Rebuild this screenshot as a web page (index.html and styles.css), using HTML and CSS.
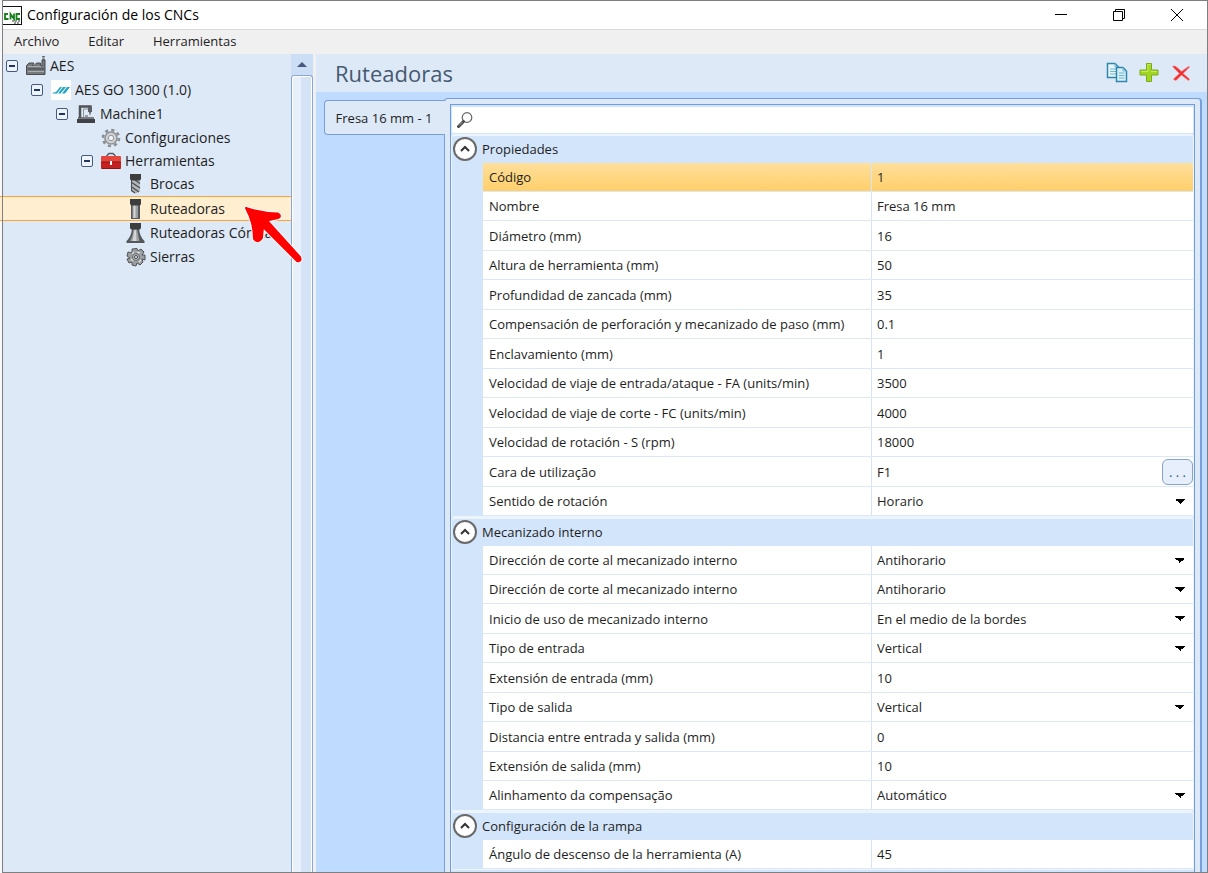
FILE: index.html
```html
<!DOCTYPE html>
<html lang="es">
<head>
<meta charset="utf-8">
<title>Configuración de los CNCs</title>
<link rel="stylesheet" href="styles.css">
</head>
<body>
<div class="window">
  <header class="titlebar">
    <svg class="app-icon" viewBox="0 0 19 19" aria-hidden="true">
      <rect x="0" y="0" width="19" height="19" fill="#111"/>
      <rect x="0" y="1" width="18" height="17" fill="#fff"/>
      <path d="M5 8H2V13H5.500M7.500 13.500V8L11 13V7.500M17 8H13.500V13H17" fill="none" stroke="#15801c" stroke-width="1.800"/>
      <path d="M9 15h8M11 17h6" stroke="#999" stroke-width="2" stroke-dasharray="2 1"/>
    </svg>
    <span class="title">Configuración de los CNCs</span>
    <div class="window-buttons">
      <button class="window-button" aria-label="Minimizar"><svg viewBox="0 0 12 12"><path d="M0 5.500H12"/></svg></button>
      <button class="window-button" aria-label="Restaurar"><svg viewBox="0 0 12 12"><path d="M.5 2.500H9.500V11.500H.5ZM2.500 2.500V.5H11.500V9.500H9.500"/></svg></button>
      <button class="window-button" aria-label="Cerrar"><svg viewBox="0 0 12 12"><path d="M0 0L12 12M12 0L0 12"/></svg></button>
    </div>
  </header>

  <nav class="menubar">
    <button class="menu">Archivo</button>
    <button class="menu">Editar</button>
    <button class="menu">Herramientas</button>
  </nav>

  <div class="workspace">
    <aside class="sidebar">
      <ul class="tree">
        <li>
          <div class="node"><button class="toggle" aria-label="Contraer AES"></button>
            <svg class="node-icon" viewBox="0 0 20 20"><path d="M.5 18.500V9.500L3 7H8L6.500 9.500H8L10.500 7H14.500V9.500H16V4H19V18.500Z" fill="#777a7d" stroke="#4a4c4f"/><path d="M2 10.500H15M2 15.500H18" stroke="#a9acae"/><path d="M2 13H18" stroke="#55585b" stroke-width="1.500"/><path d="M17.500 0V5" stroke="#55585b" stroke-width="2.500" stroke-dasharray="1.500 1"/></svg>
            <button class="node-label">AES</button></div>
          <ul>
            <li>
              <div class="node level-1"><button class="toggle" aria-label="Contraer AES GO 1300"></button>
                <svg class="node-icon" viewBox="0 0 20 20"><rect width="20" height="20" fill="#fff"/><path d="M1 13.500Q2 12 5 12L9 7H11L6 13.500ZM7 13.500L12 7H15L9.500 13.500ZM11 13.500L16 7H19L14 13.500Z" fill="#23a5c4"/></svg>
                <button class="node-label">AES GO 1300 (1.0)</button></div>
              <ul>
                <li>
                  <div class="node level-2"><button class="toggle" aria-label="Contraer Machine1"></button>
                    <svg class="node-icon" viewBox="0 0 20 20"><path d="M2 13H18V15H2Z" fill="#777a7e"/><path d="M1 15H19V19H1Z" fill="#3f4246"/><path d="M4 14V2.500H14.500V6" fill="none" stroke="#505358" stroke-width="2.500"/><path d="M7.500 13V5H12" fill="none" stroke="#8c8f93"/><path d="M12 3H16V8H15L14 12L13 8H12Z" fill="#5d6167"/><path d="M9 12H12" stroke="#505358"/></svg>
                    <button class="node-label">Machine1</button></div>
                  <ul>
                    <li><div class="node level-3"><span class="toggle-space"></span>
                      <svg class="node-icon" viewBox="0 0 20 20"><circle cx="10" cy="10" r="8" fill="none" stroke="#8b8e92" stroke-width="2.600" stroke-dasharray="3.140 3.140"/><circle cx="10" cy="10" r="6" fill="#cfd1d4" stroke="#909397" stroke-width="1.600"/><circle cx="10" cy="10" r="2.700" fill="#eef2f8" stroke="#94979b"/></svg>
                      <button class="node-label">Configuraciones</button></div></li>
                    <li>
                      <div class="node level-3"><button class="toggle" aria-label="Contraer Herramientas"></button>
                        <svg class="node-icon" viewBox="0 0 20 20"><path d="M6 6V4.500L8 2.500H12L14 4.500V6" fill="none" stroke="#565a5f" stroke-width="1.500"/><rect x="0" y="5" width="20" height="6" rx="1" fill="#e4463d"/><path d="M0 11H20V17.500H0Z" fill="#c62020"/><path d="M0 11H20" stroke="#8a1517"/><path d="M.5 17.500H19.500" stroke="#86191b"/><rect x="9" y="10" width="2" height="4" fill="#fff"/></svg>
                        <button class="node-label">Herramientas</button></div>
                      <ul>
                        <li><div class="node level-4"><span class="toggle-space"></span>
                          <svg class="node-icon" viewBox="0 0 20 20"><path d="M5 6H14V17L10 19.500L5 17Z" fill="#b3b6b8"/><path d="M5 8L14 14M5 12.500L13 18M9 6L14 9.500M5.500 16.500L9 19" stroke="#4d5053" stroke-width="1.400"/><path d="M5.500 6V17" stroke="#4d5053"/><path d="M4 0H15V5L14 6.500H5L4 5Z" fill="#3c3d3f"/></svg>
                          <button class="node-label">Brocas</button></div></li>
                        <li><div class="node level-4 selected"><span class="toggle-space"></span>
                          <svg class="node-icon" viewBox="0 0 20 20"><path d="M5 6H14V20H5Z" fill="#55585a"/><path d="M6.500 6H12V19H6.500Z" fill="#9da0a2"/><path d="M7.500 6H9.500V19H7.500Z" fill="#d3d5d6"/><path d="M4 0H15V5L14 6.500H5L4 5Z" fill="#3c3d3f"/></svg>
                          <button class="node-label">Ruteadoras</button></div></li>
                        <li><div class="node level-4"><span class="toggle-space"></span>
                          <svg class="node-icon" viewBox="0 0 20 20"><path d="M6 6H13Q14 14 18.500 18V20H.5V18Q5 14 6 6Z" fill="#55585a"/><path d="M7.500 6H11L13.500 18H4Q7 13 7.500 6Z" fill="#9da0a2"/><path d="M8.500 7H10L10.500 18H6.500Z" fill="#d3d5d6"/><path d="M4 0H15V5L14 6.500H5L4 5Z" fill="#3c3d3f"/></svg>
                          <button class="node-label">Ruteadoras Cónicas</button></div></li>
                        <li><div class="node level-4"><span class="toggle-space"></span>
                          <svg class="node-icon" viewBox="0 0 20 20"><path d="M6 2L11 1.500L12 4L15 2L18 5L16 8L19 8V13L16 12L17 15L14 18L11 16L10 19L6 18V15L3 16L1 12L4 11L1 9L2 5L6 6Z" fill="#9c9fa2" stroke="#505356" stroke-linejoin="round"/><path d="M6 7L8 5M14 6L11 5M15 13L13 15M5 12L7 14" stroke="#dcdedf" stroke-width="1.500"/><circle cx="10" cy="10" r="3.500" fill="#b9bcbe" stroke="#686b6e"/><circle cx="10" cy="10" r="1.500" fill="#eef2f6" stroke="#46494c"/></svg>
                          <button class="node-label">Sierras</button></div></li>
                      </ul>
                    </li>
                  </ul>
                </li>
              </ul>
            </li>
          </ul>
        </li>
      </ul>
      <div class="scrollbar">
        <button class="scroll-up" aria-label="Subir"></button>
        <div class="scroll-thumb"></div>
      </div>
      <svg class="pointer-arrow" viewBox="0 0 60 60" aria-hidden="true">
        <g stroke-linejoin="round">
          <path class="halo" d="M2 3Q18 8 34 8.500Q38 11 34 13L23 15.500L56 52Q58 57 53 56L19 22L18 33Q14 39 10 34Q10 18 2 3Z"/>
          <path class="arrow" d="M2 3Q18 8 34 8.500Q38 11 34 13L23 15.500L56 52Q58 57 53 56L19 22L18 33Q14 39 10 34Q10 18 2 3Z"/>
        </g>
      </svg>
    </aside>

    <main class="content">
      <div class="content-header">
        <h1>Ruteadoras</h1>
        <div class="toolbar">
          <button class="tool" aria-label="Copiar"><svg viewBox="0 0 22 22"><path d="M1.500 1.500H9L12.500 5V15.500H1.500Z" fill="#e6f5fb" stroke="#2f87ad" stroke-width="1.500"/><path d="M9 1.500V5H12.500M4 7H10M4 9.500H10M4 12H10" fill="none" stroke="#6eb5d1"/><path d="M10.500 5.500H17L20.500 9V19.500H10.500Z" fill="#d9eff8" stroke="#2f87ad" stroke-width="1.500"/><path d="M17 5.500V9H20.500M13 11H18.500M13 13.500H18.500M13 16H18.500" fill="none" stroke="#6eb5d1"/></svg></button>
          <button class="tool" aria-label="Agregar"><svg viewBox="0 0 22 22"><path d="M8.500 1.500H13.500V8H20V13H13.500V19.500H8.500V13H2V8H8.500Z" fill="#a0d622" stroke="#7cab1e" stroke-linejoin="round"/><path d="M9.500 2.500H12.500M3 9.500H10V3M13 9.500H19" fill="none" stroke="#c3ea5c"/></svg></button>
          <button class="tool" aria-label="Eliminar"><svg viewBox="0 0 22 22"><path d="M2.500 4.500Q5 3 7 5.500L11.500 9.500L18.500 4.500L19.500 5L13 11.500L19.500 17L18.500 18.500L11.500 13L6.500 18Q4.500 19 3.500 17L9.500 11.500Z" fill="#f52b2d" stroke="#f77676" stroke-width=".7"/></svg></button>
        </div>
      </div>

      <div class="content-body">
        <div class="tabs" role="tablist">
          <button class="tab" role="tab" aria-selected="true">Fresa 16 mm - 1</button>
        </div>
        <div class="panel">
          <div class="grid">
            <label class="search">
              <svg viewBox="0 0 18 18" aria-hidden="true"><circle cx="11" cy="6.500" r="4.800" fill="#fff" stroke="#666" stroke-width="1.200"/><path d="M7.500 10.500L2.500 15.500" stroke="#444" stroke-width="3" stroke-linecap="round"/><path d="M6.500 11L3 14.500" stroke="#aaa"/></svg>
              <input type="text" aria-label="Buscar">
            </label>

            <section class="group">
              <h2 class="group-header"><button class="collapse" aria-label="Contraer Propiedades"><svg viewBox="0 0 20 20"><path d="M6 12L10 8L14 12"/></svg></button>Propiedades</h2>
              <div class="rows">
                <div class="row active"><label for="codigo">Código</label><div class="value"><input id="codigo" value="1"></div></div>
                <div class="row"><label for="nombre">Nombre</label><div class="value"><input id="nombre" value="Fresa 16 mm"></div></div>
                <div class="row"><label for="diametro">Diámetro (mm)</label><div class="value"><input id="diametro" value="16"></div></div>
                <div class="row"><label for="altura">Altura de herramienta (mm)</label><div class="value"><input id="altura" value="50"></div></div>
                <div class="row"><label for="profundidad">Profundidad de zancada (mm)</label><div class="value"><input id="profundidad" value="35"></div></div>
                <div class="row"><label for="compensacion">Compensación de perforación y mecanizado de paso (mm)</label><div class="value"><input id="compensacion" value="0.1"></div></div>
                <div class="row"><label for="enclavamiento">Enclavamiento (mm)</label><div class="value"><input id="enclavamiento" value="1"></div></div>
                <div class="row"><label for="vel-entrada">Velocidad de viaje de entrada/ataque - FA (units/min)</label><div class="value"><input id="vel-entrada" value="3500"></div></div>
                <div class="row"><label for="vel-corte">Velocidad de viaje de corte - FC (units/min)</label><div class="value"><input id="vel-corte" value="4000"></div></div>
                <div class="row"><label for="vel-rotacion">Velocidad de rotación - S (rpm)</label><div class="value"><input id="vel-rotacion" value="18000"></div></div>
                <div class="row"><label for="cara">Cara de utilização</label><div class="value"><input id="cara" value="F1"><button class="more" aria-label="Elegir cara">. . .</button></div></div>
                <div class="row"><label for="sentido">Sentido de rotación</label><div class="value"><select id="sentido"><option>Horario</option></select></div></div>
              </div>
            </section>

            <section class="group">
              <h2 class="group-header"><button class="collapse" aria-label="Contraer Mecanizado interno"><svg viewBox="0 0 20 20"><path d="M6 12L10 8L14 12"/></svg></button>Mecanizado interno</h2>
              <div class="rows">
                <div class="row"><label for="direccion-1">Dirección de corte al mecanizado interno</label><div class="value"><select id="direccion-1"><option>Antihorario</option></select></div></div>
                <div class="row"><label for="direccion-2">Dirección de corte al mecanizado interno</label><div class="value"><select id="direccion-2"><option>Antihorario</option></select></div></div>
                <div class="row"><label for="inicio">Inicio de uso de mecanizado interno</label><div class="value"><select id="inicio"><option>En el medio de la bordes</option></select></div></div>
                <div class="row"><label for="tipo-entrada">Tipo de entrada</label><div class="value"><select id="tipo-entrada"><option>Vertical</option></select></div></div>
                <div class="row"><label for="ext-entrada">Extensión de entrada (mm)</label><div class="value"><input id="ext-entrada" value="10"></div></div>
                <div class="row"><label for="tipo-salida">Tipo de salida</label><div class="value"><select id="tipo-salida"><option>Vertical</option></select></div></div>
                <div class="row"><label for="distancia">Distancia entre entrada y salida (mm)</label><div class="value"><input id="distancia" value="0"></div></div>
                <div class="row"><label for="ext-salida">Extensión de salida (mm)</label><div class="value"><input id="ext-salida" value="10"></div></div>
                <div class="row"><label for="alineacion">Alinhamento da compensação</label><div class="value"><select id="alineacion"><option>Automático</option></select></div></div>
              </div>
            </section>

            <section class="group">
              <h2 class="group-header"><button class="collapse" aria-label="Contraer Configuración de la rampa"><svg viewBox="0 0 20 20"><path d="M6 12L10 8L14 12"/></svg></button>Configuración de la rampa</h2>
              <div class="rows">
                <div class="row"><label for="angulo">Ángulo de descenso de la herramienta (A)</label><div class="value"><input id="angulo" value="45"></div></div>
              </div>
            </section>
          </div>
        </div>
      </div>
    </main>
  </div>
</div>
</body>
</html>
```
FILE: styles.css
```css
* {
  box-sizing: border-box;
}

body {
  margin: 0;
  padding-left: 2px;
  background: #f6f8fa;
  color: #1e1e1e;
  font: 13px/18px "Open Sans", "Noto Sans", sans-serif;
}

button,
input,
select {
  margin: 0;
  padding: 0;
  border: 0;
  background: none;
  color: inherit;
  font: inherit;
}

ul {
  margin: 0;
  padding: 0;
  list-style: none;
}

.window {
  display: flex;
  flex-direction: column;
  height: 100vh;
  border: 1px solid #7f7f7f;
  background: #f0f0f0;
}

/* Title bar and menu */
.titlebar {
  display: flex;
  flex: none;
  align-items: center;
  height: 28px;
  background: #fff;
  color: #000;
}

.app-icon {
  width: 19px;
  height: 19px;
}

.title {
  margin-left: 5px;
  font-size: 14px;
}

.window-buttons {
  display: flex;
  margin-left: auto;
  padding-right: 1px;
}

.window-button {
  display: grid;
  place-items: center;
  width: 58px;
  height: 28px;
}

.window-button svg {
  width: 12px;
  height: 12px;
  fill: none;
  stroke: #000;
}

.menubar {
  display: flex;
  flex: none;
  gap: 29px;
  height: 25px;
  padding: 0 0 2px 11px;
  border-top: 1px solid #d9dcdc;
}

/* Navigation tree */
.workspace {
  display: flex;
  flex: 1;
  gap: 3px;
  min-height: 0;
}

.sidebar {
  position: relative;
  display: flex;
  flex: none;
  width: 310px;
  background: #dde9f7;
}

.tree {
  flex: 1;
  min-width: 0;
  font-size: 14px;
}

.node {
  display: flex;
  align-items: center;
  height: 24px;
  padding-left: 3px;
}

.level-1 { padding-left: 28px; }
.level-2 { padding-left: 53px; }
.level-3 { height: 23px; padding-left: 78px; }
.level-4 { padding-left: 103px; }

.toggle {
  width: 12px;
  height: 12px;
  border: 1px solid #465a80;
  border-radius: 2px;
  background: linear-gradient(#20365e, #20365e) center / 6px 2px no-repeat, #edf3fb;
}

.toggle-space {
  width: 12px;
}

.node-icon {
  flex: none;
  width: 20px;
  height: 20px;
  margin: 0 4px 0 8px;
}

.node-label {
  white-space: nowrap;
}

.selected {
  position: relative;
  height: 25px;
  border: solid #fba23b;
  border-width: 1px 0;
  background: #ffefd0;
}

.selected::before {
  content: "";
  position: absolute;
  top: -1px;
  bottom: -1px;
  left: -3px;
  width: 2px;
  border: solid #fba23b;
  border-width: 1px 0;
  background: #ffefd0;
}

.scrollbar {
  display: flex;
  flex-direction: column;
  width: 22px;
}

.scroll-up {
  display: grid;
  flex: none;
  place-items: center;
  height: 21px;
  background: #cbdef5;
}

.scroll-up::before {
  content: "";
  border: solid transparent;
  border-width: 0 5px 5px;
  border-bottom-color: #44577c;
}

.scroll-thumb {
  flex: 1;
  border: 1px solid #8ba6d2;
  border-bottom: 0;
  border-radius: 3px 3px 0 0;
  background: linear-gradient(90deg, #e8f0fb 45%, #d4e3f5 45%);
  box-shadow: inset 1px 1px #fff, inset -1px 0 #fff;
}

.pointer-arrow {
  position: absolute;
  top: 151px;
  left: 241px;
  width: 60px;
  height: 60px;
  overflow: visible;
}

.halo {
  fill: #fff;
  stroke: #fff;
  stroke-width: 4px;
}

.arrow {
  fill: #fe0000;
  stroke: #fe0000;
  stroke-width: 2px;
}

/* Content */
.content {
  display: flex;
  flex: 1;
  flex-direction: column;
  min-width: 0;
  background: #bfdbff;
}

.content-header {
  display: flex;
  flex: none;
  align-items: center;
  height: 38px;
  padding: 0 15px 0 19px;
  background: #dde9f7;
}

h1 {
  margin: 0;
  color: #465a70;
  font-size: 22px;
  font-weight: 400;
}

.toolbar {
  display: flex;
  gap: 10px;
  margin-left: auto;
}

.tool {
  width: 22px;
  height: 22px;
}

.tool svg {
  display: block;
}

.content-body {
  display: flex;
  flex: 1;
  min-height: 0;
  padding: 6px 5px 0 8px;
}

.tabs {
  z-index: 1;
  flex: none;
  width: 121px;
  margin-right: -1px;
  padding-top: 2px;
}

.tab {
  width: 100%;
  height: 35px;
  padding-right: 2px;
  border: 1px solid #769fdb;
  border-right: 0;
  border-radius: 4px 0 0 4px;
  background: #dde9f7;
}

.panel {
  flex: 1;
  min-width: 0;
  padding: 5px 5px 0;
  border: 1px solid #769fdb;
  border-right-width: 2px;
  border-bottom: 0;
  border-radius: 4px 4px 0 0;
  background: #dde9f7;
}

.grid {
  height: 100%;
  overflow: hidden;
  border: 1px solid #6e9cdf;
  border-bottom: 0;
  background: #d3e5fb;
}

.search {
  display: flex;
  align-items: center;
  height: 29px;
  padding-left: 4px;
  border: solid #d3e5fb;
  border-width: 2px 1px 1px;
  background: #fff;
}

.search svg {
  width: 18px;
  height: 18px;
}

.search input {
  flex: 1;
  min-width: 0;
  outline: 0;
}

.group {
  border: solid #ebf4ff;
  border-width: 2px 1px 1px;
  border-radius: 4px 4px 0 0;
}

.group-header {
  display: flex;
  align-items: center;
  gap: 5px;
  height: 27px;
  margin: 0;
  padding: 0 0 1px 1px;
  font-size: 13px;
  font-weight: 400;
}

.collapse {
  width: 24px;
  height: 24px;
  border: 2px solid #6a6a6a;
  border-radius: 50%;
  background: #fff;
}

.collapse svg {
  display: block;
  fill: none;
  stroke: #333;
  stroke-width: 2px;
}

.rows {
  margin-left: 31px;
}

.row {
  display: grid;
  grid-template-columns: 388px 1fr;
  align-items: center;
  height: 29px;
  padding-left: 6px;
  border-bottom: 1px solid #dce8f8;
  background: #fff;
}

.row:nth-child(odd):not(:first-child, :last-child) {
  height: 30px;
}

.active {
  background: linear-gradient(#ffdf9b, #ffcf6b);
}

.value {
  display: flex;
  align-items: center;
  align-self: stretch;
  min-width: 0;
  margin-left: -6px;
  padding-left: 5px;
  border-left: 1px solid #d5e4f8;
}

.value input,
.value select {
  flex: 1;
  min-width: 0;
  height: 20px;
  outline: 0;
}

.value select {
  appearance: none;
  background: linear-gradient(to bottom right, #000 50%, transparent 50%) right 8px center / 5px 5px no-repeat, linear-gradient(to bottom left, #000 50%, transparent 50%) right 13px center / 5px 5px no-repeat;
}

.more {
  width: 31px;
  height: 26px;
  border: 1px solid #84a3cf;
  border-radius: 6px;
  background: #e6effb;
  color: #23538a;
}
```
